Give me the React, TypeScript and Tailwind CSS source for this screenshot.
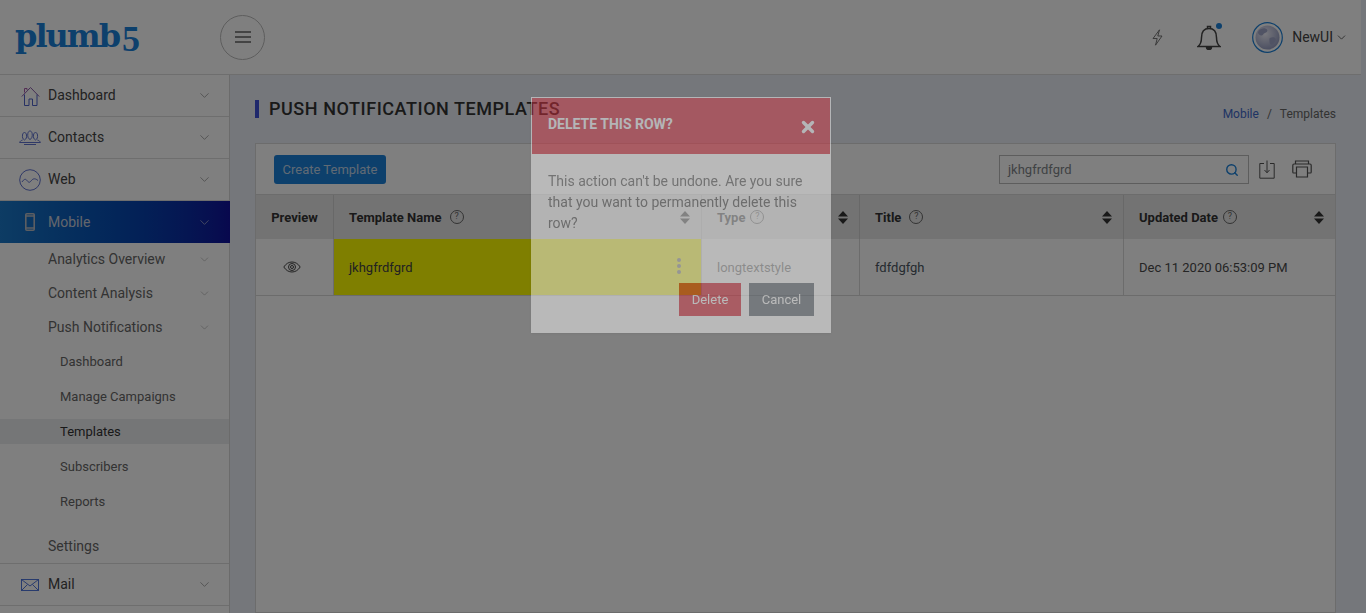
import React from "react";
import { ChevronDown, Search, X } from "lucide-react";

const roboto = "font-['Roboto',sans-serif]";

function HouseIcon() {
  return (
    <svg width="19" height="20" viewBox="0 0 19 20" fill="none" stroke="#4f63c8" strokeWidth="1">
      <path d="M.8 10.500 9.500 1.500l8.700 9" stroke="#8a5aa8" />
      <path d="M3.500 8.500v11h4.500v-6.500h3.500v6.500H16v-11" />
      <path d="M3.500 6.500V2.500h2.500v1.500" stroke="#a85aa8" />
    </svg>
  );
}

function ContactsIcon() {
  return (
    <svg width="22" height="15" viewBox="0 0 22 15" fill="none" stroke="#4f63c8" strokeWidth="0.9">
      <path d="M5.500 10c-1.800-1-2.300-2.500-2-5 .2-1.600 1-2.500 2-2.500s1.800.9 2 2.500c.3 2.500-.2 4-2 5z" />
      <path d="M11 9.500C9 8.500 8.500 6.500 8.800 3.800 9 2 9.900 1 11 1s2 1 2.200 2.800c.3 2.700-.2 4.700-2.200 5.700z" />
      <path d="M16.500 10c-1.800-1-2.300-2.500-2-5 .2-1.600 1-2.500 2-2.500s1.800.9 2 2.500c.3 2.500-.2 4-2 5z" />
      <path d="M.6 12.500c.6-1.500 1.500-2 3-2.500M21.400 12.500c-.6-1.500-1.500-2-3-2.500M.6 12.500h20.800M5 14.500h12" />
    </svg>
  );
}

function WebIcon() {
  return (
    <svg width="22" height="22" viewBox="0 0 22 22" fill="none" stroke="#4f63c8" strokeWidth="0.9">
      <circle cx="11" cy="11" r="10.300" />
      <path d="M3 13c2-3 3.500-3.500 5-1.500s2.500 2.500 4 .5 3.500-3.500 7-.5" />
    </svg>
  );
}

function PhoneIcon() {
  return (
    <svg width="10" height="18" viewBox="0 0 10 18" fill="none" stroke="#b9bcc4" strokeWidth="1.600">
      <rect x="0.800" y="0.800" width="8.400" height="16.400" rx="1" />
      <path d="M1 3h8M1 15h8" />
    </svg>
  );
}

function MailIcon() {
  return (
    <svg width="18" height="12" viewBox="0 0 18 12" fill="none" stroke="#3f68d8" strokeWidth="0.9">
      <rect x="0.500" y="0.500" width="17" height="11" />
      <path d="m.5.500 8.500 6.500 8.500-6.500M.5 11.500l6-6M17.500 11.500l-6-6" />
    </svg>
  );
}

function BoltIcon() {
  return (
    <svg width="11" height="17" viewBox="0 0 11 17" fill="none" stroke="#666" strokeWidth="0.9">
      <path d="M7.500.8 1 9.500h4.200L3.500 16.200 10 7H5.800z" />
    </svg>
  );
}

function BellIcon() {
  return (
    <svg width="24" height="25" viewBox="0 0 24 25" fill="none" stroke="#444" strokeWidth="1.500">
      <path d="M1 21.500c2.500-2 3.500-4.500 3.500-9C4.500 7 7 3.500 12 3.500s7.500 3.500 7.500 9c0 4.500 1 7 3.500 9z" />
      <path d="M10.500 3.500V1.500h3v2" />
      <path d="M9.500 22c0 1.500 1 2.500 2.500 2.500s2.500-1 2.500-2.500" fill="#444" />
    </svg>
  );
}

function GlobeAvatar() {
  return (
    <svg width="31" height="31" viewBox="0 0 31 31">
      <defs>
        <radialGradient id="globe" cx="0.4" cy="0.35" r="0.75">
          <stop offset="0" stopColor="#f0f0fa" />
          <stop offset="1" stopColor="#8c94bc" />
        </radialGradient>
      </defs>
      <circle cx="15.500" cy="15.500" r="14.800" fill="none" stroke="#1b80d8" strokeWidth="1.200" />
      <circle cx="15.500" cy="15.500" r="12" fill="url(#globe)" />
      <path d="M9 7c3-1.500 5-.5 6 .5s0 3-2 3.500-2 3-4 2.500-3-2-3-3 1-2.500 3-3.500zM18 16c2-1 4.500-1 5.500.5s-1 5-3 6-3-1-3-3-.5-3 .5-3.500z" fill="#a0a6c8" />
    </svg>
  );
}

function HelpDot() {
  return (
    <span className="inline-flex h-[14px] w-[14px] -translate-y-px items-center justify-center rounded-full border border-[#666] text-[9px] font-normal leading-none text-[#666]">
      ?
    </span>
  );
}

function SortArrows() {
  return (
    <svg width="10" height="13" viewBox="0 0 10 13" fill="#333">
      <path d="M5 0l5 5.500H0zM5 13 0 7.500h10z" />
    </svg>
  );
}

function NavRow({ icon, label }: { icon: React.ReactNode; label: string }) {
  return (
    <div className="flex h-[42px] items-center border-b border-[#dcdcdc] pr-[17px] text-[14px] text-[#444]">
      <span className="flex w-[48px] shrink-0 justify-center pl-[18px] pr-[6px]">{icon}</span>
      <span className="flex-1">{label}</span>
      <ChevronDown size={15} strokeWidth={1} color="#777" />
    </div>
  );
}

function SubRow({ label }: { label: string }) {
  return (
    <div className="flex h-[34px] items-center pl-[48px] pr-[18px] text-[14px] text-[#666]">
      <span className="flex-1">{label}</span>
      <ChevronDown size={13} strokeWidth={1} color="#999" />
    </div>
  );
}

function Sidebar() {
  const leafs = ["Dashboard", "Manage Campaigns", "Templates", "Subscribers", "Reports"];
  return (
    <aside className="h-full w-[230px] shrink-0 border-r border-[#d6d6d6] bg-white">
      <NavRow icon={<HouseIcon />} label="Dashboard" />
      <NavRow icon={<ContactsIcon />} label="Contacts" />
      <NavRow icon={<WebIcon />} label="Web" />
      <div className="-mr-px flex h-[42px] items-center bg-gradient-to-r from-[#1a78c8] to-[#10109c] pr-[18px] text-[14px] text-[#c8ccd8]">
        <span className="flex w-[48px] shrink-0 justify-center pl-[18px] pr-[6px]">
          <PhoneIcon />
        </span>
        <span className="flex-1">Mobile</span>
        <ChevronDown size={15} strokeWidth={1} color="#c8ccd8" />
      </div>
      <div className="-mt-px">
        <SubRow label="Analytics Overview" />
        <SubRow label="Content Analysis" />
        <SubRow label="Push Notifications" />
        {leafs.map((l) => (
          <div key={l} className="flex h-[35px] items-center">
            <div
              className={
                l === "Templates"
                  ? "flex h-[25px] w-full items-center bg-[#eaecef] pl-[60px] text-[13px] text-[#333]"
                  : "flex h-[25px] w-full items-center pl-[60px] text-[13px] text-[#666]"
              }
            >
              {l}
            </div>
          </div>
        ))}
        <div className="flex h-[45px] items-center border-b border-[#dcdcdc] pl-[48px] pt-[11px] text-[14px] text-[#666]">
          Settings
        </div>
      </div>
      <NavRow icon={<MailIcon />} label="Mail" />
    </aside>
  );
}

function Header() {
  return (
    <header className="flex h-[75px] w-[1361px] shrink-0 items-center border-b border-[#dcdcdc] bg-white">
      <div className="ml-[15px] flex w-[205px] -translate-y-[2px] items-baseline font-['DejaVu_Serif',serif] text-[32px] font-bold leading-none tracking-[-2px] text-[#1b80d8]">
        plumb
        <span className="ml-[3px] translate-y-[4px] font-['Liberation_Serif',serif] text-[36px] font-bold tracking-normal">5</span>
      </div>
      <button className="flex h-[45px] w-[45px] items-center justify-center rounded-full border border-[#bbb]">
        <span className="flex w-[16px] flex-col gap-[3px]">
          <span className="h-[2px] bg-[#888]" />
          <span className="h-[2px] bg-[#888]" />
          <span className="h-[2px] bg-[#888]" />
        </span>
      </button>
      <div className="ml-auto flex items-center">
        <BoltIcon />
        <span className="relative ml-[34px]">
          <BellIcon />
          <span className="absolute right-[-1px] top-[-2px] h-[6px] w-[6px] rounded-full bg-[#1b80d8]" />
        </span>
        <span className="ml-[31px] flex">
          <GlobeAvatar />
        </span>
        <span className="ml-[9px] text-[14px] text-[#444]">NewUI</span>
        <ChevronDown size={13} strokeWidth={1.500} color="#444" className="ml-[2px] mr-[13px]" />
      </div>
    </header>
  );
}

const headCell = "flex h-[44px] items-center bg-[#e6e6e6] pl-[15px] pr-[11px] pt-[1px] font-bold text-[#333]";
const bodyCell = "flex h-[56px] items-center px-[15px] pt-[2px]";

function Table() {
  return (
    <div className="flex-1 border border-[#d8d8d8] bg-white">
      <div className="flex h-[51px] items-center border-b border-[#d8d8d8] pl-[18px] pr-[23px]">
        <button className="h-[29px] w-[112px] rounded-[3px] bg-[#1b80d8] pt-[1px] text-[13px] text-[#c0d4e8]">Create Template</button>
        <div className="ml-auto mr-[2px] flex h-[29px] w-[250px] items-center justify-between border border-[#bbb] pl-[8px] pr-[9px] pt-[1px] text-[13px] text-[#808488]">
          jkhgfrdfgrd
          <Search size={14} strokeWidth={2.400} color="#1b80d8" />
        </div>
        <svg className="ml-[8px]" width="16" height="19" viewBox="0 0 16 19" fill="none" stroke="#555" strokeWidth="1">
          <path d="M5 3.500H.8v14.700h14.400V3.500H11M8 .5v12M5.500 10 8 12.800 10.500 10" />
        </svg>
        <svg className="ml-[17px]" width="20" height="18" viewBox="0 0 20 18" fill="none" stroke="#555" strokeWidth="1.200">
          <path d="M3.500 4V1h13v3M4 13H1.500C1 13 .8 12.500.8 12V5.500C.8 4.800 1.300 4 2 4h16c.7 0 1.200.8 1.200 1.500V12c0 .5-.2 1-.7 1H16" />
          <path d="M4.500 7h11v10h-11z" />
        </svg>
      </div>
      <div className="grid grid-cols-[78px_368px_158px_264px_1fr] border-b border-[#d8d8d8] text-[13px]">
        <div className="flex h-[44px] items-center justify-center border-r border-[#d0d0d0] bg-[#e6e6e6] pt-[1px] font-bold text-[#333]">Preview</div>
        <div className={`${headCell} gap-[8px] border-r border-[#d0d0d0]`}>
          <span>Template Name</span>
          <HelpDot />
          <span className="ml-auto">
            <SortArrows />
          </span>
        </div>
        <div className={`${headCell} gap-[5px] border-r border-[#d0d0d0]`}>
          <span>Type</span>
          <HelpDot />
          <span className="ml-auto">
            <SortArrows />
          </span>
        </div>
        <div className={`${headCell} gap-[8px] border-r border-[#d0d0d0]`}>
          <span>Title</span>
          <HelpDot />
          <span className="ml-auto">
            <SortArrows />
          </span>
        </div>
        <div className={`${headCell} gap-[5px]`}>
          <span>Updated Date</span>
          <HelpDot />
          <span className="ml-auto">
            <SortArrows />
          </span>
        </div>
        <div className="flex h-[56px] items-center justify-center border-r border-[#d8d8d8] pr-[5px]">
          <svg width="18" height="12" viewBox="0 0 18 12" fill="none" stroke="#444" strokeWidth="1">
            <path d="M.8 6C3 2.500 6 1 9 1s6 1.500 8.200 5C15 9.500 12 11 9 11S3 9.500.8 6z" />
            <circle cx="9" cy="6" r="3.500" />
            <circle cx="9" cy="6" r="1.500" />
          </svg>
        </div>
        <div className={`${bodyCell} relative border-r border-[#d8d8d8] bg-[#ffff00] text-[#444]`}>
          jkhgfrdfgrd
          <span className="absolute right-[20px] top-[19px] flex flex-col gap-[2px]">
            <span className="h-[4px] w-[4px] rounded-full bg-[#777]" />
            <span className="h-[4px] w-[4px] rounded-full bg-[#777]" />
            <span className="h-[4px] w-[4px] rounded-full bg-[#777]" />
          </span>
        </div>
        <div className={`${bodyCell} border-r border-[#d8d8d8] text-[#555]`}>longtextstyle</div>
        <div className={`${bodyCell} border-r border-[#d8d8d8] text-[#4a5560]`}>fdfdgfgh</div>
        <div className={`${bodyCell} text-[#4a4a4a]`}>Dec 11 2020 06:53:09 PM</div>
      </div>
    </div>
  );
}

function DeleteModal() {
  return (
    <div className="absolute left-[531px] top-[97px] h-[236px] w-[300px] border border-white bg-white opacity-[0.46] shadow-sm">
      <div className="flex h-[56px] items-start justify-between bg-[#dc3545] px-[16px] pt-[16px] text-[14px] font-bold text-white">
        DELETE THIS ROW?
        <X size={18} strokeWidth={4.500} className="mr-[-3px] mt-[4px]" />
      </div>
      <div className="px-[16px] pt-[17px] text-[14px] leading-[21px] text-[#666]">
        This action can't be undone. Are you sure that you want to permanently delete this row?
      </div>
      <div className="mt-[49px] flex justify-end gap-[8px] pr-[16px] text-[13px] text-white">
        <button className="h-[33px] w-[62px] bg-[#dc3545] pt-[1px]">Delete</button>
        <button className="h-[33px] w-[65px] bg-[#6c757d] pt-[1px]">Cancel</button>
      </div>
    </div>
  );
}

export default function App() {
  return (
    <div className={`relative flex h-[613px] w-[1366px] flex-col overflow-hidden bg-[#eaeef6] ${roboto}`}>
      <Header />
      <div className="flex min-h-0 flex-1">
        <Sidebar />
        <main className="flex min-w-0 flex-1 flex-col pl-[25px] pr-[30px]">
          <div className="flex h-[68px] shrink-0 items-center justify-between">
            <h1 className="border-l-[4px] border-[#3f51d8] pl-[10px] text-[18px] font-medium uppercase leading-[18px] tracking-[0.550px] text-[#333]">
              Push Notification Templates
            </h1>
            <div className="mt-[10px] text-[12px] text-[#666]">
              <span className="text-[#3f68c8]">Mobile</span>
              <span className="mx-[8px]">/</span>Templates
            </div>
          </div>
          <Table />
        </main>
      </div>
      <div className="absolute inset-0 bg-black/50" />
      <DeleteModal />
    </div>
  );
}
